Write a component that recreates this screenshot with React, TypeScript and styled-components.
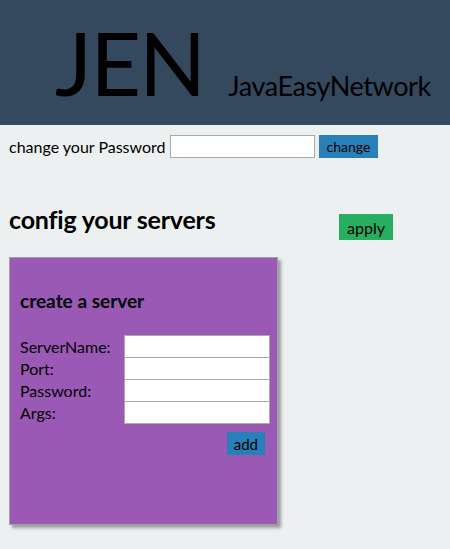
import React from 'react'
import styled, { createGlobalStyle } from 'styled-components'

const GlobalStyle = createGlobalStyle`
  body {
    margin: 0;
    background: #ecf0f1;
    font-family: Lato, 'Open Sans', sans-serif;
    color: #000;
  }
`

const Header = styled.header`
  height: 125px;
  background: #34495e;
  display: flex;
  align-items: baseline;
  padding-left: 55px;
  box-sizing: border-box;
`

const Logo = styled.h1`
  margin: 0;
  font-weight: 400;
  font-size: 88px;
  line-height: 125px;
  letter-spacing: -2px;
`

const Tagline = styled.span`
  margin-left: 24px;
  font-size: 27px;
  letter-spacing: -0.4px;
`

const Main = styled.main`
  padding: 10px 9px;
`

const PasswordRow = styled.div`
  display: flex;
  align-items: center;
  gap: 4px;
  font-size: 16px;
`

const TextInput = styled.input<{ $w?: number }>`
  box-sizing: border-box;
  width: ${(p) => p.$w ?? 146}px;
  height: 23px;
  border: 1px solid #aaa;
  background: #fff;
  margin: 0;
  padding: 0 3px;
  outline: none;
`

const Button = styled.button<{ $color: string; $size?: 'sm' | 'md' | 'lg' }>`
  border: none;
  background: ${(p) => p.$color};
  font-family: inherit;
  color: #000;
  padding: 0 ${(p) => (p.$size === 'md' ? 7 : 8)}px;
  height: ${(p) => (p.$size === 'lg' ? 26 : 23)}px;
  font-size: ${(p) => (p.$size === 'lg' ? 16 : p.$size === 'md' ? 15 : 14)}px;
  cursor: pointer;
`

const ConfigHead = styled.div`
  display: flex;
  align-items: flex-start;
  margin-top: 46px;
`

const Title = styled.h2`
  margin: 0;
  width: 330px;
  font-size: 25px;
  font-weight: 700;
  line-height: 30px;
  letter-spacing: -0.2px;
`

const ApplyWrap = styled.div`
  padding-top: 10px;
`

const Card = styled.section`
  margin-top: 17px;
  width: 269px;
  height: 268px;
  box-sizing: border-box;
  background: #9b59b6;
  border: 1px solid #a0a0a0;
  box-shadow: 3px 3px 3px rgba(0, 0, 0, 0.35);
  padding: 0 10px;
`

const CardTitle = styled.h3`
  margin: 31px 0 23px;
  font-size: 19px;
  font-weight: 700;
  line-height: 24px;
`

const FormGrid = styled.div`
  display: grid;
  grid-template-columns: 104px 146px;
  font-size: 16px;
`

const Label = styled.label`
  line-height: 22px;
`

const FieldInput = styled(TextInput)`
  margin-top: -1px;
`

const Actions = styled.div`
  display: flex;
  justify-content: flex-end;
  padding-right: 2px;
  margin-top: 8px;
`

const fields = ['ServerName:', 'Port:', 'Password:', 'Args:']

export default function App() {
  return (
    <>
      <GlobalStyle />
      <Header>
        <Logo>JEN</Logo>
        <Tagline>JavaEasyNetwork</Tagline>
      </Header>
      <Main>
        <PasswordRow>
          <span>change your Password</span>
          <TextInput type="password" $w={145} />
          <Button $color="#2980b9">change</Button>
        </PasswordRow>
        <ConfigHead>
          <Title>config your servers</Title>
          <ApplyWrap>
            <Button $color="#27ae60" $size="lg">apply</Button>
          </ApplyWrap>
        </ConfigHead>
        <Card>
          <CardTitle>create a server</CardTitle>
          <FormGrid>
            {fields.map((f) => (
              <React.Fragment key={f}>
                <Label>{f}</Label>
                <FieldInput type="text" />
              </React.Fragment>
            ))}
          </FormGrid>
          <Actions>
            <Button $color="#2980b9" $size="md">add</Button>
          </Actions>
        </Card>
      </Main>
    </>
  )
}
